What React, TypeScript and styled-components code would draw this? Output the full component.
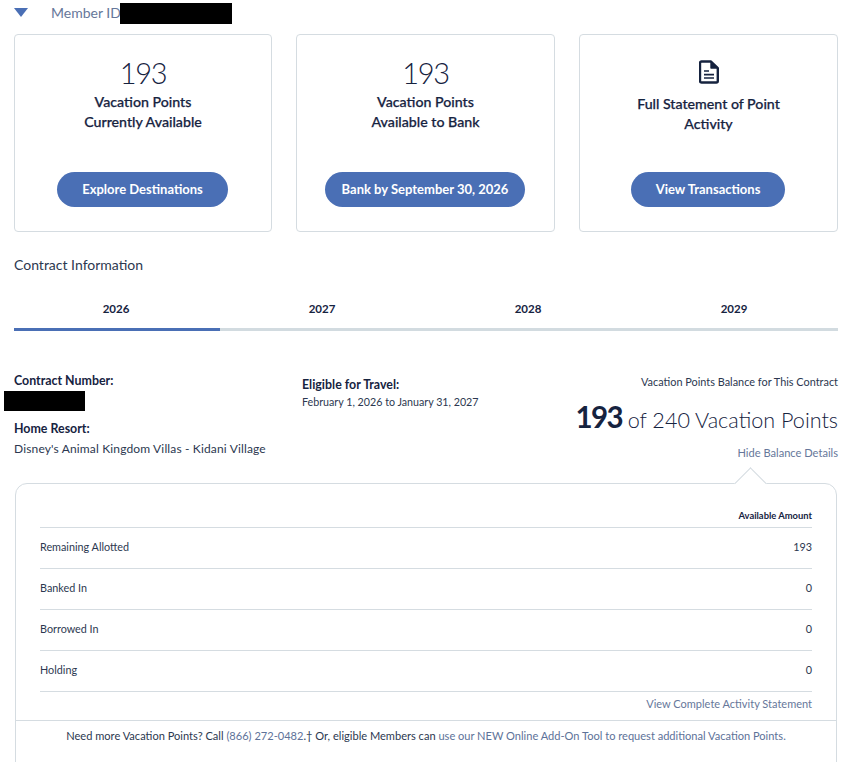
import { FC } from "react"
import styled, { createGlobalStyle } from "styled-components"

const years = ["2026", "2027", "2028", "2029"]

const balances = [
  { label: "Remaining Allotted", amount: 193 },
  { label: "Banked In", amount: 0 },
  { label: "Borrowed In", amount: 0 },
  { label: "Holding", amount: 0 },
]

const DocumentIcon: FC = () => (
  <svg width="20" height="24" viewBox="0 0 20 24" fill="none" stroke="#16233f" strokeWidth="2.4" strokeLinejoin="round">
    <path d="M2.5 1.5h9.5l6.8 6.5V21a1.5 1.5 0 0 1-1.5 1.5H2.5A1.5 1.5 0 0 1 1 21V3a1.5 1.5 0 0 1 1.5-1.5z" />
    <path d="M12 2v6h6.5z" strokeWidth="1.4" fill="#16233f" />
    <path d="M5 11h5M5 14.6h10M5 18h10" strokeWidth="1.7" />
  </svg>
)

const App: FC = () => {
  return (
    <Page>
      <GlobalStyle />
      <MemberRow>
        <Caret />
        <MemberLabel>
          Member ID
          <MemberRedaction />
        </MemberLabel>
      </MemberRow>

      <Cards>
        <Card>
          <BigNumber>193</BigNumber>
          <CardTitle>
            Vacation Points
            <br />
            Currently Available
          </CardTitle>
          <PillButton $width={171}>Explore Destinations</PillButton>
        </Card>
        <Card>
          <BigNumber>193</BigNumber>
          <CardTitle>
            Vacation Points
            <br />
            Available to Bank
          </CardTitle>
          <PillButton $width={200}>Bank by September 30, 2026</PillButton>
        </Card>
        <Card>
          <IconSlot>
            <DocumentIcon />
          </IconSlot>
          <CardTitle $icon>
            Full Statement of Point
            <br />
            Activity
          </CardTitle>
          <PillButton $width={154}>View Transactions</PillButton>
        </Card>
      </Cards>

      <SectionTitle>Contract Information</SectionTitle>

      <Tabs>
        {years.map((year, index) => (
          <Tab key={year} $active={index === 0}>
            {year}
          </Tab>
        ))}
      </Tabs>

      <Summary>
        <ContractColumn>
          <FieldLabel>Contract Number:</FieldLabel>
          <ContractRedaction />
          <FieldLabel>Home Resort:</FieldLabel>
          <FieldValue>Disney's Animal Kingdom Villas - Kidani Village</FieldValue>
        </ContractColumn>
        <TravelColumn>
          <FieldLabel>Eligible for Travel:</FieldLabel>
          <FieldValue $tight>February 1, 2026 to January 31, 2027</FieldValue>
        </TravelColumn>
        <BalanceColumn>
          <BalanceCaption>Vacation Points Balance for This Contract</BalanceCaption>
          <BalanceLine>
            <strong>193</strong> of 240 Vacation Points
          </BalanceLine>
          <DetailsLink>Hide Balance Details</DetailsLink>
        </BalanceColumn>
      </Summary>

      <DetailsPanel>
        <Pointer />
        <DetailsBody>
          <AmountHeading>Available Amount</AmountHeading>
          {balances.map((row) => (
            <BalanceRow key={row.label}>
              <span>{row.label}</span>
              <span>{row.amount}</span>
            </BalanceRow>
          ))}
          <StatementLink>View Complete Activity Statement</StatementLink>
        </DetailsBody>
        <PanelFooter>
          Need more Vacation Points? Call <FooterLink>(866) 272-0482</FooterLink>.† Or, eligible Members can{" "}
          <FooterLink>use our NEW Online Add-On Tool to request additional Vacation Points.</FooterLink>
        </PanelFooter>
      </DetailsPanel>
    </Page>
  )
}

const GlobalStyle = createGlobalStyle`
  html, body {
    margin: 0;
    background: #fff;
    overflow: hidden;
  }
  body {
    font-family: "Lato", "Noto Sans", sans-serif;
    color: #16233f;
  }
`

const Page = styled.div`
  width: 850px;
  height: 762px;
  box-sizing: border-box;
  padding: 0 12px 0 14px;
  overflow: hidden;
`

const MemberRow = styled.div`
  height: 34px;
  display: flex;
  align-items: flex-start;
`

const Caret = styled.span`
  width: 0;
  height: 0;
  margin-top: 8px;
  border-left: 7px solid transparent;
  border-right: 7px solid transparent;
  border-top: 9px solid #4a6fb5;
`

const MemberLabel = styled.div`
  position: relative;
  margin-left: 23px;
  margin-top: 4px;
  font-size: 14px;
  line-height: 17px;
  color: #66779a;
`

const MemberRedaction = styled.span`
  position: absolute;
  left: 69px;
  top: -1px;
  width: 112px;
  height: 21px;
  background: #000;
`

const Cards = styled.div`
  display: grid;
  grid-template-columns: 258px 259px 259px;
  gap: 24px;
`

const Card = styled.div`
  height: 198px;
  box-sizing: border-box;
  border: 1px solid #d5dce1;
  border-radius: 4px;
  padding-top: 21px;
  display: flex;
  flex-direction: column;
  align-items: center;
`

const BigNumber = styled.div`
  font-size: 29px;
  font-weight: 300;
  line-height: 34px;
  letter-spacing: -1.4px;
`

const IconSlot = styled.div`
  height: 26px;
  margin-top: 4px;
  display: flex;
`

const CardTitle = styled.div<{ $icon?: boolean }>`
  margin-top: ${(p) => (p.$icon ? "8px" : "2px")};
  height: 40px;
  font-size: 14.2px;
  font-weight: 500;
  line-height: 20px;
  text-align: center;
  -webkit-text-stroke: 0.25px #16233f;
`

const PillButton = styled.button<{ $width: number }>`
  width: ${(p) => p.$width}px;
  height: 35px;
  margin-top: auto;
  margin-right: 1px;
  margin-bottom: 24px;
  padding: 0 0 2px;
  border: 0;
  border-radius: 18px;
  background: #4a6fb5;
  color: #fff;
  font-family: inherit;
  font-size: 13px;
  font-weight: 700;
`

const SectionTitle = styled.div`
  margin-top: 24px;
  font-size: 14px;
  line-height: 17px;
  color: #2c3850;
`

const Tabs = styled.div`
  margin-top: 27px;
  display: grid;
  grid-template-columns: repeat(4, 1fr);
`

const Tab = styled.div<{ $active?: boolean }>`
  height: 31px;
  box-sizing: border-box;
  padding-right: 2px;
  border-bottom: 3px solid ${(p) => (p.$active ? "#4a6fb5" : "#d2dbe0")};
  text-align: center;
  font-size: 11.5px;
  font-weight: 700;
  line-height: 18px;
`

const Summary = styled.div`
  height: 152px;
  display: flex;
`

const ContractColumn = styled.div`
  flex: 0 0 288px;
  padding-top: 42px;
`

const TravelColumn = styled.div`
  flex: 0 0 270px;
  padding-top: 46px;
`

const BalanceColumn = styled.div`
  flex: 1;
  padding-top: 44px;
  text-align: right;
`

const FieldLabel = styled.div`
  font-size: 12.4px;
  font-weight: 700;
  line-height: 16px;
`

const ContractRedaction = styled.div`
  width: 81px;
  height: 20px;
  margin: 2px 0 10px -10px;
  background: #000;
`

const FieldValue = styled.div<{ $tight?: boolean }>`
  margin-top: ${(p) => (p.$tight ? "1px" : "4px")};
  font-size: ${(p) => (p.$tight ? "10.7px" : "12px")};
  letter-spacing: ${(p) => (p.$tight ? "0" : "0.15px")};
  line-height: 15px;
  color: #2c3850;
`

const BalanceCaption = styled.div`
  font-size: 10.9px;
  line-height: 14px;
  color: #2c3850;
`

const BalanceLine = styled.div`
  margin-top: 9px;
  font-size: 21.6px;
  font-weight: 300;
  line-height: 38px;
  white-space: nowrap;

  strong {
    font-size: 29.5px;
    font-weight: 700;
    letter-spacing: -1.7px;
  }
`

const DetailsLink = styled.div`
  margin-top: 7px;
  font-size: 11.1px;
  line-height: 14px;
  color: #66779a;
`

const DetailsPanel = styled.div`
  position: relative;
  margin: 0 1px;
  height: 291px;
  box-sizing: border-box;
  border: 1px solid #d5dce1;
  border-radius: 12px;
`

const Pointer = styled.span`
  position: absolute;
  right: 74px;
  top: -12px;
  width: 23px;
  height: 23px;
  box-sizing: border-box;
  background: #fff;
  border-top: 1px solid #d5dce1;
  border-left: 1px solid #d5dce1;
  transform: rotate(45deg);
`

const DetailsBody = styled.div`
  height: 236px;
  box-sizing: border-box;
  padding: 25px 24px 0;
`

const AmountHeading = styled.div`
  height: 19px;
  box-sizing: border-box;
  border-bottom: 1px solid #d5dce1;
  text-align: right;
  font-size: 9.4px;
  font-weight: 700;
  line-height: 13px;
`

const BalanceRow = styled.div`
  height: 41px;
  box-sizing: border-box;
  padding-bottom: 3px;
  border-bottom: 1px solid #d5dce1;
  display: flex;
  justify-content: space-between;
  align-items: center;
  font-size: 10.8px;
  color: #2c3850;
`

const StatementLink = styled.div`
  margin-top: 5px;
  text-align: right;
  font-size: 11px;
  line-height: 14px;
  color: #66779a;
`

const PanelFooter = styled.div`
  border-top: 1px solid #d5dce1;
  padding-top: 7px;
  text-align: center;
  font-size: 11.07px;
  line-height: 15px;
  color: #2c3850;
`

const FooterLink = styled.span`
  color: #5d7299;
`

export default App
